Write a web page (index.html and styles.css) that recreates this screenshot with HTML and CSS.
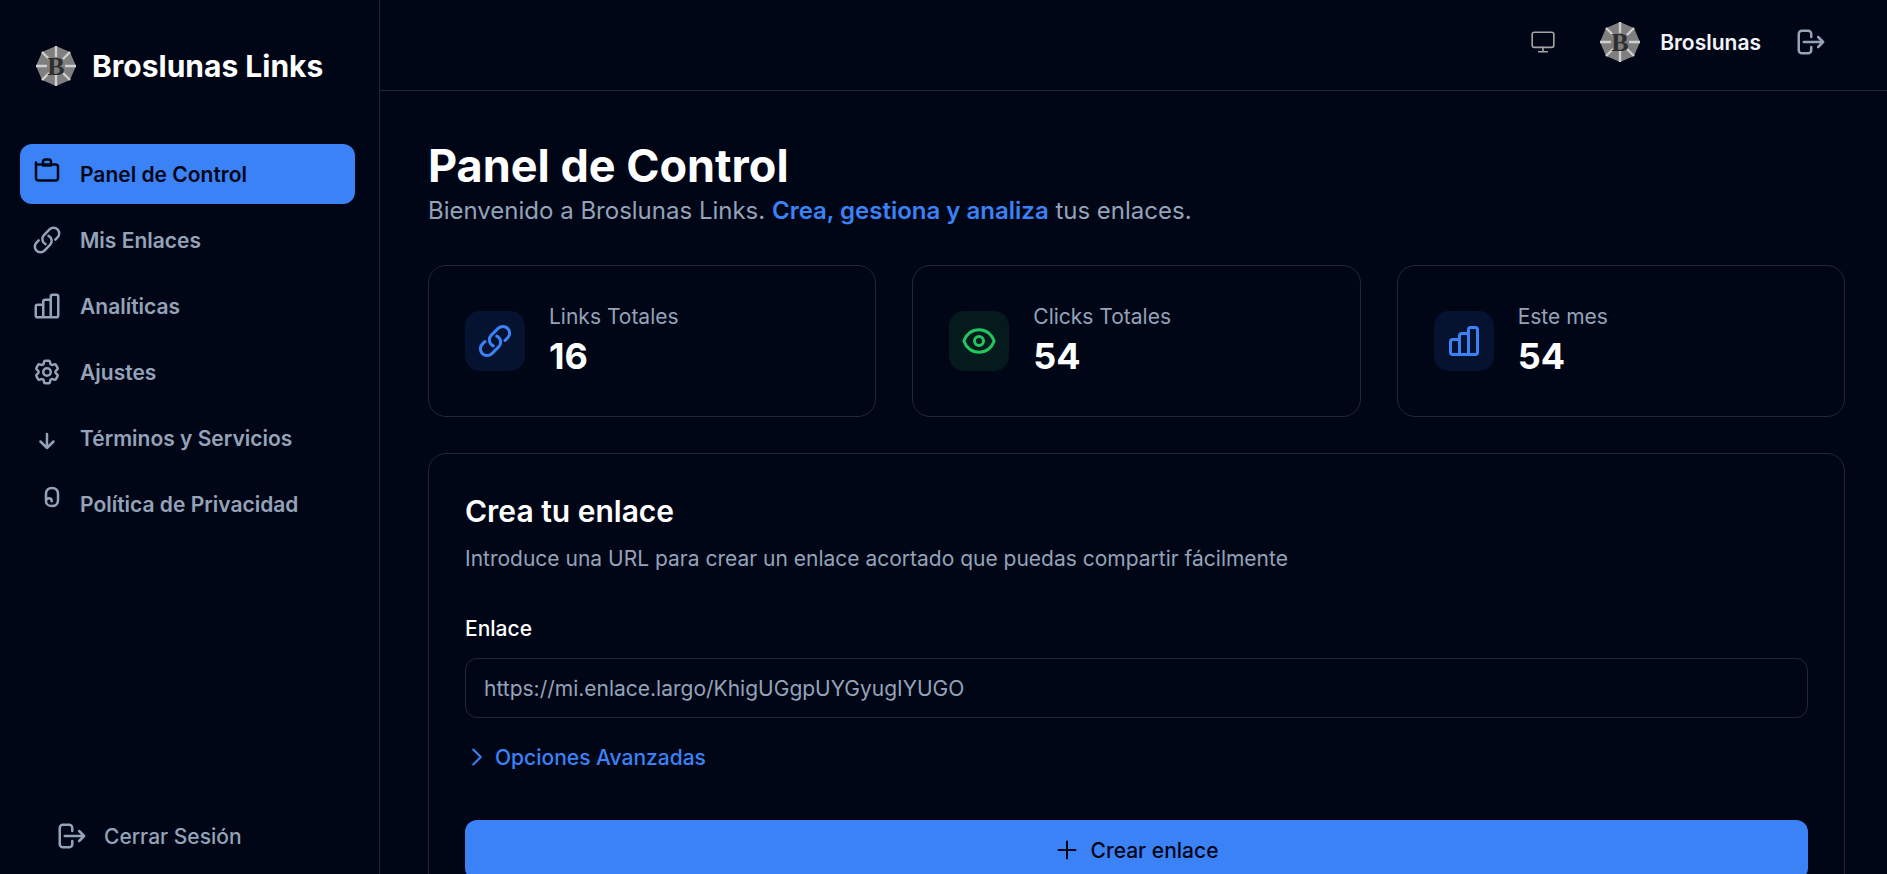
FILE: index.html
```html
<!DOCTYPE html>
<html lang="es">
<head>
<meta charset="utf-8">
<meta name="viewport" content="width=device-width, initial-scale=1">
<title>Broslunas Links</title>
<link rel="stylesheet" href="styles.css">
</head>
<body>

<svg class="defs" width="0" height="0">
  <symbol id="i-link" viewBox="0 0 24 24"><path d="M13.19 8.688a4.5 4.5 0 0 1 1.242 7.244l-4.5 4.5a4.5 4.5 0 0 1-6.364-6.364l1.757-1.757m13.35-.622 1.757-1.757a4.5 4.5 0 0 0-6.364-6.364l-4.5 4.5a4.5 4.5 0 0 0 1.242 7.244"/></symbol>
  <symbol id="i-chart" viewBox="0 0 24 24"><path d="M3 12.500A1.500 1.500 0 0 1 4.500 11h3A1.500 1.500 0 0 1 9 12.500V21H4.500A1.500 1.500 0 0 1 3 19.500ZM9 8.500A1.500 1.500 0 0 1 10.500 7h3A1.500 1.500 0 0 1 15 8.500V21H9ZM15 4.500A1.500 1.500 0 0 1 16.500 3h3A1.500 1.500 0 0 1 21 4.500v15a1.500 1.500 0 0 1-1.500 1.500H15Z"/></symbol>
  <symbol id="i-logout" viewBox="0 0 24 24"><path d="M13 8V5.500A2.500 2.500 0 0 0 10.500 3h-5A2.500 2.500 0 0 0 3 5.500v13A2.500 2.500 0 0 0 5.500 21h5a2.500 2.500 0 0 0 2.500-2.500V16M7 12h15.500m-4-4 4 4-4 4"/></symbol>
</svg>

<div class="app">

  <!-- sidebar -->
  <aside class="sidebar">
    <div class="brand">
      <svg class="logo" viewBox="0 0 40 40">
        <polygon class="logo-body" points="20,0 34,6 40,20 34,34 20,40 6,34 0,20 6,6"/>
        <path class="logo-rays" d="M20 0v11M20 29v11M0 20h11M29 20h11M6 6l7 7M34 6l-7 7M6 34l7-7M34 34l-7-7"/>
        <text class="logo-letter" x="20" y="29" text-anchor="middle">B</text>
      </svg>
      <span class="brand-name">Broslunas Links</span>
    </div>

    <nav class="nav">
      <a class="nav-item active">
        <span class="nav-icon up">
          <svg class="icon" viewBox="0 0 24 24"><path d="M3.200 6v12.400a2 2 0 0 0 2 2h13.600a2 2 0 0 0 2-2V9.600a2 2 0 0 0-2-2H4.800M8.800 8.400V5.600a2 2 0 0 1 2-2h2.400a2 2 0 0 1 2 2v2.800M8.800 8.400h6.400"/></svg>
        </span>
        Panel de Control
      </a>
      <a class="nav-item">
        <span class="nav-icon"><svg class="icon"><use href="#i-link"/></svg></span>
        Mis Enlaces
      </a>
      <a class="nav-item">
        <span class="nav-icon"><svg class="icon"><use href="#i-chart"/></svg></span>
        Analíticas
      </a>
      <a class="nav-item">
        <span class="nav-icon">
          <svg class="icon" viewBox="0 0 24 24"><path d="M9.594 3.94c.09-.542.56-.94 1.11-.94h2.593c.55 0 1.02.398 1.11.94l.213 1.281c.063.374.313.686.645.87.074.04.147.083.22.127.325.196.72.257 1.075.124l1.217-.456a1.125 1.125 0 0 1 1.37.49l1.296 2.247a1.125 1.125 0 0 1-.26 1.431l-1.003.827c-.293.241-.438.613-.43.992a7.723 7.723 0 0 1 0 .255c-.008.378.137.75.43.991l1.004.827c.424.35.534.955.26 1.43l-1.298 2.247a1.125 1.125 0 0 1-1.369.491l-1.217-.456c-.355-.133-.75-.072-1.076.124a6.47 6.47 0 0 1-.22.128c-.331.183-.581.495-.644.869l-.213 1.281c-.09.543-.56.94-1.11.94h-2.594c-.55 0-1.019-.398-1.11-.94l-.213-1.281c-.062-.374-.312-.686-.644-.87a6.52 6.52 0 0 1-.22-.127c-.325-.196-.72-.257-1.076-.124l-1.217.456a1.125 1.125 0 0 1-1.369-.49l-1.297-2.247a1.125 1.125 0 0 1 .26-1.431l1.004-.827c.292-.24.437-.613.43-.991a6.932 6.932 0 0 1 0-.255c.007-.38-.138-.751-.43-.992l-1.004-.827a1.125 1.125 0 0 1-.26-1.43l1.297-2.247a1.125 1.125 0 0 1 1.37-.491l1.216.456c.356.133.751.072 1.076-.124.072-.044.146-.086.22-.128.332-.183.582-.495.644-.869l.214-1.28Z"/><path d="M15 12a3 3 0 1 1-6 0 3 3 0 0 1 6 0Z"/></svg>
        </span>
        Ajustes
      </a>
      <a class="nav-item">
        <span class="nav-icon down">
          <svg class="icon" viewBox="0 0 24 24"><path d="M12 6.400v11.200M6.800 12.400 12 17.600l5.200-5.200"/></svg>
        </span>
        Términos y Servicios
      </a>
      <a class="nav-item">
        <span class="nav-icon privacy">
          <svg class="icon" viewBox="0 0 24 24"><path d="M7.200 15.500v-6C7.200 6.500 9.200 4.800 12 4.800s4.800 1.700 4.800 4.700v5c0 3-2 4.700-4.800 4.700s-4.800-1.700-4.800-3.700c0-1.400 1-2.500 2.300-2.500s2.300 1 2.300 2.300"/></svg>
        </span>
        Política de Privacidad
      </a>
    </nav>

    <a class="signout">
      <svg class="icon"><use href="#i-logout"/></svg>
      Cerrar Sesión
    </a>
  </aside>

  <div class="content">

    <!-- top bar -->
    <header class="topbar">
      <svg class="icon monitor" viewBox="0 0 24 24"><rect x="2" y="3" width="20" height="14" rx="2"/><path d="M8 21h8M12 17v4"/></svg>
      <svg class="logo user-logo" viewBox="0 0 40 40">
        <polygon class="logo-body" points="20,0 34,6 40,20 34,34 20,40 6,34 0,20 6,6"/>
        <path class="logo-rays" d="M20 0v11M20 29v11M0 20h11M29 20h11M6 6l7 7M34 6l-7 7M6 34l7-7M34 34l-7-7"/>
        <text class="logo-letter" x="20" y="29" text-anchor="middle">B</text>
      </svg>
      <span class="user-name">Broslunas</span>
      <svg class="icon logout"><use href="#i-logout"/></svg>
    </header>

    <main class="main">
      <h1 class="title">Panel de Control</h1>
      <p class="subtitle">Bienvenido a Broslunas Links. <strong>Crea, gestiona y analiza</strong> tus enlaces.</p>

      <section class="stats">
        <div class="card stat">
          <div class="stat-icon blue"><svg class="icon"><use href="#i-link"/></svg></div>
          <div>
            <div class="stat-label">Links Totales</div>
            <div class="stat-value">16</div>
          </div>
        </div>
        <div class="card stat">
          <div class="stat-icon green">
            <svg class="icon" viewBox="0 0 24 24"><path d="M2.036 12.322a1.012 1.012 0 0 1 0-.639C3.423 7.51 7.36 4.5 12 4.500c4.638 0 8.573 3.007 9.963 7.178.07.207.07.431 0 .639C20.577 16.49 16.64 19.5 12 19.5c-4.638 0-8.573-3.007-9.963-7.178Z"/><path d="M15 12a3 3 0 1 1-6 0 3 3 0 0 1 6 0Z"/></svg>
          </div>
          <div>
            <div class="stat-label">Clicks Totales</div>
            <div class="stat-value">54</div>
          </div>
        </div>
        <div class="card stat">
          <div class="stat-icon blue"><svg class="icon"><use href="#i-chart"/></svg></div>
          <div>
            <div class="stat-label">Este mes</div>
            <div class="stat-value">54</div>
          </div>
        </div>
      </section>

      <section class="card create">
        <h2 class="create-title">Crea tu enlace</h2>
        <p class="create-text">Introduce una URL para crear un enlace acortado que puedas compartir fácilmente</p>
        <label class="field-label" for="url">Enlace</label>
        <input class="field" id="url" type="text" placeholder="https://mi.enlace.largo/KhigUGgpUYGyugIYUGO">
        <a class="advanced">
          <svg class="icon" viewBox="0 0 24 24"><path d="m8.250 4.500 7.500 7.500-7.500 7.500"/></svg>
          Opciones Avanzadas
        </a>
        <button class="submit" type="button">
          <svg class="icon" viewBox="0 0 24 24"><path d="M12 3.500v17M3.500 12h17"/></svg>
          Crear enlace
        </button>
      </section>
    </main>
  </div>
</div>

</body>
</html>
```

FILE: styles.css
```css
* {box-sizing: border-box}

html, body {
  margin: 0;
  height: 100%;
  overflow: hidden;
}

body {
  background-color: #010617;
  color: #fff;
  font-family: "Inter", "Liberation Sans", sans-serif;
}

.defs {
  position: absolute;
}

.app {
  display: flex;
  height: 100vh;
}

.icon {
  width: 30px;
  height: 30px;
  flex: none;
  fill: none;
  stroke: currentColor;
  stroke-width: 2;
  stroke-linecap: round;
  stroke-linejoin: round;
}

.logo {
  width: 40px;
  height: 40px;
  flex: none;
}

.logo-body {
  fill: #7f7f7f;
}

.logo-rays {
  fill: none;
  stroke: #cfcfcf;
  stroke-width: 2.4;
}

.logo-letter {
  font-family: "Liberation Serif", serif;
  font-size: 26px;
  font-weight: 700;
  fill: #2e2e2e;
}

/* Sidebar */
.sidebar {
  display: flex;
  flex-direction: column;
  flex: none;
  width: 380px;
  padding: 0 24px 0 20px;
  border-right: 1px solid #1e293b;
}

.brand {
  display: flex;
  align-items: center;
  gap: 16px;
  height: 144px;
  padding: 0 0 12px 16px;
}

.brand-name {
  font-size: 30px;
  font-weight: 700;
  white-space: nowrap;
}

.nav {
  display: flex;
  flex-direction: column;
  gap: 6px;
  flex: 1;
}

.nav-item {
  display: flex;
  align-items: center;
  gap: 18px;
  height: 60px;
  padding-left: 12px;
  border-radius: 12px;
  color: #94a3b8;
  font-size: 21px;
  font-weight: 600;
}

.nav-item.active {
  background-color: #3b82f6;
  color: #020617;
}

.nav-icon {
  display: flex;
  width: 30px;
  height: 30px;
  flex: none;
}

/* the icons of these rows do not sit on the text line */
.nav-icon.up {
  margin-top: -9px;
}

.nav-icon.down {
  margin-top: 6px;
}

.nav-icon.privacy {
  margin: -14px -5px 0 5px;
}

.signout {
  display: flex;
  align-items: center;
  gap: 18px;
  height: 76px;
  padding-left: 36px;
  color: #94a3b8;
  font-size: 21px;
  font-weight: 500;
}

/* Top bar */
.content {
  flex: 1;
  min-width: 0;
}

.topbar {
  display: flex;
  align-items: center;
  justify-content: flex-end;
  height: 91px;
  padding: 0 62px 6px 0;
  border-bottom: 1px solid #1e293b;
}

.monitor {
  width: 26px;
  height: 26px;
  color: #a3a3a3;
  stroke-width: 1.5;
  margin-right: 44px;
}

.user-logo {
  margin-right: 20px;
}

.user-name {
  color: #f1f5f9;
  font-size: 21px;
  font-weight: 600;
  margin-right: 34px;
}

.logout {
  color: #94a3b8;
}

/* Main */
.main {
  padding: 48px 42px 0 48px;
}

.title {
  margin: 0;
  font-size: 45px;
  line-height: 54px;
  font-weight: 700;
}

.subtitle {
  margin: 0 0 36px;
  color: #94a3b8;
  font-size: 24px;
  line-height: 36px;
}

.subtitle strong {
  color: #3b82f6;
  font-weight: 600;
}

.card {
  border: 1px solid #1e293b;
  border-radius: 18px;
}

.stats {
  display: grid;
  grid-template-columns: repeat(3, 1fr);
  gap: 36px;
  margin-bottom: 36px;
}

.stat {
  display: flex;
  align-items: center;
  gap: 24px;
  padding: 36px;
}

.stat-icon {
  display: flex;
  align-items: center;
  justify-content: center;
  width: 60px;
  height: 60px;
  border-radius: 15px;
}

.stat-icon .icon {
  width: 36px;
  height: 36px;
}

.stat-icon.blue {
  background-color: #051330;
  color: #3b82f6;
}

.stat-icon.green {
  background-color: #041a1c;
  color: #22c55e;
}

.stat-label {
  color: #94a3b8;
  font-size: 21px;
  line-height: 30px;
}

.stat-value {
  font-size: 36px;
  line-height: 48px;
  font-weight: 700;
}

/* Create link */
.create {
  padding: 36px;
  min-height: 500px;
}

.create-title {
  margin: 0 0 12px;
  font-size: 30px;
  line-height: 42px;
  font-weight: 600;
}

.create-text {
  margin: 0 0 40px;
  color: #94a3b8;
  font-size: 21px;
  line-height: 30px;
}

.field-label {
  display: block;
  margin-bottom: 14px;
  font-size: 21px;
  line-height: 30px;
  font-weight: 500;
}

.field {
  display: block;
  width: 100%;
  height: 60px;
  padding: 0 18px;
  background-color: transparent;
  border: 1px solid #1e293b;
  border-radius: 12px;
  color: #fff;
  font-family: inherit;
  font-size: 21px;
  outline: none;
}

.field::placeholder {
  color: #94a3b8;
  opacity: 1;
}

.advanced {
  display: flex;
  align-items: center;
  gap: 6px;
  height: 30px;
  margin: 24px 0 48px;
  color: #3b82f6;
  font-size: 21px;
  font-weight: 500;
}

.advanced .icon {
  width: 24px;
  height: 24px;
}

.submit {
  display: flex;
  align-items: center;
  justify-content: center;
  gap: 12px;
  width: 100%;
  height: 60px;
  background-color: #3b82f6;
  border: none;
  border-radius: 12px;
  color: #020617;
  font-family: inherit;
  font-size: 21px;
  font-weight: 500;
}

.submit .icon {
  width: 24px;
  height: 24px;
}
```
